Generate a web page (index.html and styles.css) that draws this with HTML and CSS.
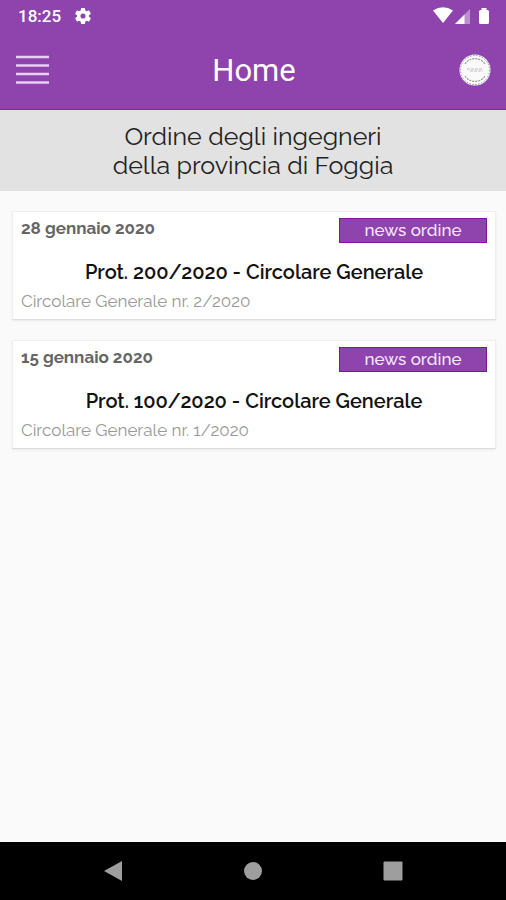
FILE: index.html
```html
<!DOCTYPE html>
<html lang="it">
<head>
<meta charset="utf-8">
<meta name="viewport" content="width=device-width, initial-scale=1">
<title>Home</title>
<link rel="stylesheet" href="styles.css">
</head>
<body>
<div class="status">
  <span class="clock">18:25</span>
  <svg class="gear" viewBox="2 2 20 20" aria-hidden="true"><path d="M19.43 12.98c.04-.32.07-.64.07-.98s-.03-.66-.07-.98l2.11-1.65c.19-.15.24-.42.12-.64l-2-3.46c-.12-.22-.39-.3-.61-.22l-2.49 1c-.52-.4-1.08-.73-1.69-.98l-.38-2.65A.49.49 0 0 0 14 2h-4c-.25 0-.46.18-.49.42l-.38 2.65c-.61.25-1.17.59-1.69.98l-2.49-1c-.23-.09-.49 0-.61.22l-2 3.46c-.13.22-.07.49.12.64l2.11 1.65c-.04.32-.07.65-.07.98s.03.66.07.98l-2.11 1.65c-.19.15-.24.42-.12.64l2 3.46c.12.22.39.3.61.22l2.49-1c.52.4 1.08.73 1.69.98l.38 2.65c.03.24.24.42.49.42h4c.25 0 .46-.18.49-.42l.38-2.65c.61-.25 1.17-.59 1.69-.98l2.49 1c.23.09.49 0 .61-.22l2-3.46c.12-.22.07-.49-.12-.64zM12 15.2a3.2 3.2 0 1 1 0-6.400 3.200 3.200 0 0 1 0 6.400z"/></svg>
  <svg class="signals" viewBox="0 0 58 18" aria-hidden="true">
    <path d="M0 3.500Q10 -3 20 3.500L10 16z"/>
    <path d="M37 2V17H22z" opacity=".4"/><path d="M31.500 7.500V17H22z"/>
    <path d="M48.500 1h5v2h1q1.500 0 1.500 1.500v11q0 1.500-1.500 1.500h-7q-1.500 0-1.500-1.500v-11q0-1.500 1.500-1.500h1z"/>
  </svg>
</div>
<header class="bar">
  <button class="icon-button" type="button" aria-label="Menu">
    <svg class="menu" viewBox="0 0 33 30" aria-hidden="true"><path d="M0 2h33M0 10.500h33M0 19h33M0 27.500h33"/></svg>
  </button>
  <h1 class="heading">Home</h1>
  <button class="icon-button" type="button" aria-label="Ordine">
    <svg class="seal" viewBox="0 0 32 32" aria-hidden="true">
      <circle cx="16" cy="16" r="15.500" fill="#fafafa"/>
      <circle cx="16" cy="16" r="14.500" fill="none" stroke="#777" stroke-width=".8" stroke-dasharray="1.500 1.500"/>
      <path d="M6 10a12 12 0 0 1 20 0M6 22a12 12 0 0 0 20 0" fill="none" stroke="#999" stroke-width="1.200" stroke-dasharray="2 1"/>
      <path d="M8 15h15M11 17h13" stroke="#bbb" stroke-width="1.200" stroke-dasharray="3 1"/>
    </svg>
  </button>
</header>
<div class="banner">Ordine degli ingegneri<br>della provincia di Foggia</div>
<main class="feed">
  <article class="card">
    <div class="meta"><time datetime="2020-01-28">28 gennaio 2020</time><span class="tag">news ordine</span></div>
    <h2 class="title">Prot. 200/2020 - Circolare Generale</h2>
    <p class="summary">Circolare Generale nr. 2/2020</p>
  </article>
  <article class="card">
    <div class="meta"><time datetime="2020-01-15">15 gennaio 2020</time><span class="tag">news ordine</span></div>
    <h2 class="title">Prot. 100/2020 - Circolare Generale</h2>
    <p class="summary">Circolare Generale nr. 1/2020</p>
  </article>
</main>
<nav class="system">
  <button class="system-button" type="button" aria-label="Indietro"><svg viewBox="0 0 20 20" aria-hidden="true"><path d="M1 10L19 0v20z"/></svg></button>
  <button class="system-button" type="button" aria-label="Schermata iniziale"><svg viewBox="0 0 20 20" aria-hidden="true"><circle cx="10" cy="10" r="9"/></svg></button>
  <button class="system-button" type="button" aria-label="App recenti"><svg viewBox="0 0 20 20" aria-hidden="true"><rect width="19" height="19" x=".5" y=".5" rx="1"/></svg></button>
</nav>
</body>
</html>
```
FILE: styles.css
```css
* { box-sizing: border-box; }
body {
  margin: 0;
  min-height: 100vh;
  display: flex;
  flex-direction: column;
  background: #fafafa;
  font-family: Raleway, Lato, sans-serif;
}
button { padding: 0; border: 0; background: none; }
svg { display: block; }
.status {
  display: flex;
  align-items: center;
  height: 32px;
  padding: 0 15px 0 18px;
  background: #8e43ad;
  color: #fff;
  fill: #fff;
}
.clock { font: 500 17px/32px Roboto, sans-serif; }
.gear { width: 16px; height: 16px; margin-left: 14px; }
.signals { width: 58px; height: 18px; margin-left: auto; }
.bar {
  display: flex;
  align-items: center;
  justify-content: space-between;
  height: 78px;
  padding: 0 15px 2px 16px;
  background: #8e43ad;
  border-bottom: 1px solid #7b2a9f;
}
.heading {
  margin: 0;
  padding-top: 3px;
  color: #fff;
  font: 400 31px/40px Roboto, sans-serif;
}
.menu { width: 33px; height: 30px; fill: none; stroke: #e8d0f2; stroke-width: 2.5; }
.seal { width: 32px; height: 32px; }
.banner {
  padding: 12px 16px 11px;
  background: #e2e2e2;
  color: #222;
  font-size: 25px;
  font-weight: 400;
  line-height: 29px;
  text-align: center;
}
.feed {
  flex: 1;
  display: flex;
  flex-direction: column;
  gap: 20px;
  padding: 20px 10px 20px 12px;
}
.card {
  padding: 6px 8px;
  background: #fff;
  border: 1px solid #eee;
  border-bottom-color: #ddd;
  box-shadow: 0 1px 2px #0001;
}
.meta {
  display: flex;
  justify-content: space-between;
  color: #666;
  font-size: 17px;
  font-weight: 700;
  line-height: 20px;
}
.tag {
  width: 148px;
  background: #8e43ad;
  border: 1px solid #7c179c;
  color: #f5e8fa;
  font-weight: 500;
  line-height: 23px;
  text-align: center;
}
.title {
  margin: 14px 0 0;
  color: #111;
  font-size: 20px;
  font-weight: 600;
  line-height: 30px;
  text-align: center;
}
.summary {
  margin: 0;
  padding-top: 2px;
  color: #999;
  font-size: 17px;
  font-weight: 400;
  line-height: 24px;
}
.system {
  display: flex;
  justify-content: center;
  gap: 120px;
  height: 58px;
  background: #000;
}
.system-button svg { width: 20px; height: 20px; fill: #9e9e9e; }
```
